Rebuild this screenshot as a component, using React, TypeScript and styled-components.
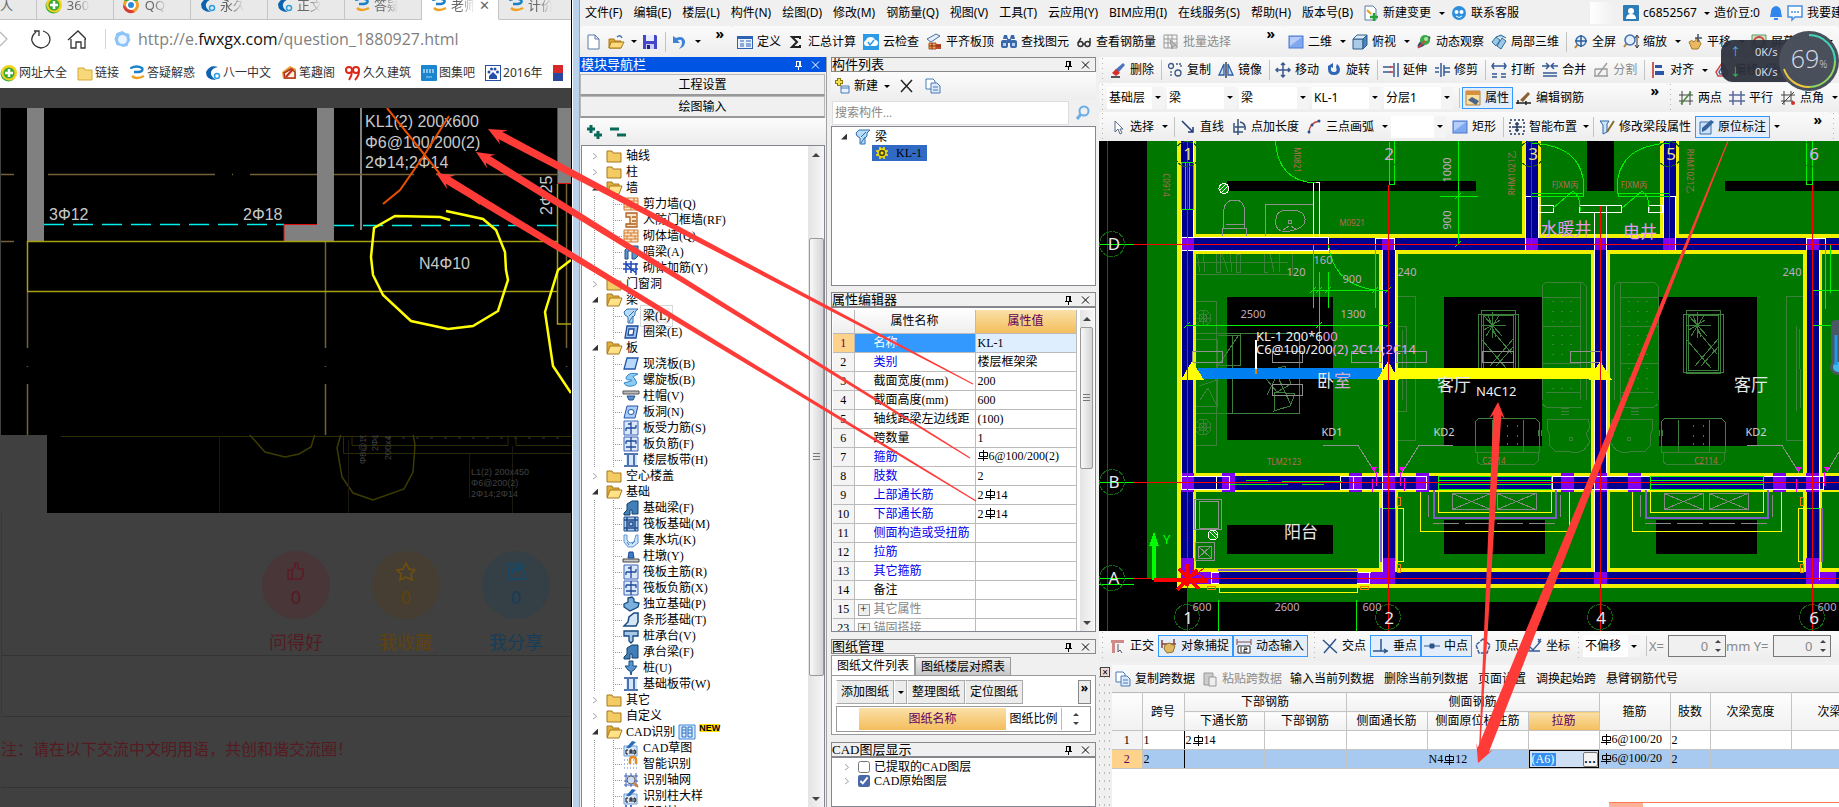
import React from "react";
import styled, { createGlobalStyle, css } from "styled-components";

const UI = `"Noto Sans", "Noto Sans CJK SC", sans-serif`;
const SONG = `"Liberation Serif", "Noto Sans CJK SC", serif`;

const GlobalStyle = createGlobalStyle`
  * { box-sizing: border-box; }
  body { margin: 0; font-family: ${UI}; font-size: 12px; line-height: 16px; color: #000; overflow: hidden; }
  button, input, select { font: inherit; color: inherit; margin: 0; }
  svg { display: block; }
  svg text { white-space: pre; }
`;

/* ---------- icons ---------- */

const blueBox = <rect x="1" y="2" width="14" height="12" fill="#7fa8ee" stroke="#4a78d0" />;
const lens = (x: number, y: number) => (
  <g>
    <path d={`M${x - 3} ${y + 3}L${x - 6} ${y + 7}`} stroke="#c08030" strokeWidth="2" />
    <circle cx={x} cy={y} r="5" fill="#e3f0fc" stroke="#4070b0" strokeWidth="1.5" />
  </g>
);
const cadBadge = (
  <g>
    <path d="M1 6h13v10H1z" fill="#d8e8fa" stroke="#6a9ad0" />
    <path d="M3 8L9 1l4 1-6 6z" fill="#2b6cb8" />
    <path d="M5 10H3v4h2M7 14v-4h2v4M7 12h2M11 10h1l1 2-1 2h-1z" fill="none" stroke="#111" />
  </g>
);

const ICONS: Record<string, React.ReactNode> = {
  file: <path d="M3 1h7l4 4v10H3z M10 1v4h4" fill="#fff" stroke="#5a7ba8" />,
  open: (
    <g>
      <path d="M1 5h5l1 2h6v7H1z" fill="#e0a830" stroke="#a87818" />
      <path d="M3 8h13l-3 6H1z" fill="#ffd97a" stroke="#a87818" />
      <path d="M9 3q3-3 5 1" fill="none" stroke="#4a78b0" strokeWidth="1.5" />
    </g>
  ),
  save: (
    <g>
      <path d="M1 1h13l1 1v13H1z" fill="#4646c8" />
      <path d="M4 1h8v6H4z" fill="#e8ecff" />
      <path d="M4 10h8v5H4z" fill="#c9cdf0" />
      <path d="M5 11h3v4H5z" fill="#202080" />
    </g>
  ),
  undo: <path d="M2 2v7h7L6.500 6.500Q11 4 11 9q0 3-3 6 7-3 6-8-2-6-9-3z" fill="#3b82d8" />,
  define: (
    <g>
      <path d="M0 2h16v13H0z" fill="#2d62b4" />
      <path d="M1 5h14v9H1z" fill="#eaf2ff" />
      <path d="M3 7h4M3 10h4M3 12h4M9 7h5M9 10h5M9 12h5" stroke="#2d62b4" />
    </g>
  ),
  sigma: <path d="M12 5V3H4l5 5-5 5h8v-2" fill="none" stroke="#222" strokeWidth="2" />,
  cloud: (
    <g>
      <rect width="16" height="16" fill="#2b9be8" />
      <path d="M4 12q-3 0-3-3 0-2 2-3 1-3 5-3 3 0 4 3 3 0 3 3t-3 3z" fill="#fff" />
      <path d="M5 8l2 3 4-5" fill="none" stroke="#2b9be8" strokeWidth="1.500" />
    </g>
  ),
  slab: (
    <g>
      <path d="M1 5l9-5 4 2-9 6z" fill="#e8eef8" stroke="#4a6ea8" />
      <path d="M3 9h7v6H3z" fill="#f0a050" stroke="#a05020" />
      <path d="M10 10h5v5h-5z" fill="#c04830" />
      <path d="M3 12h12M6 9v6" stroke="#803010" />
    </g>
  ),
  find: (
    <g fill="#3a68a8">
      <path d="M3 1h3l1 4H2zM10 1h3l1 4H9z" />
      <rect x="0" y="6" width="7" height="8" rx="2" />
      <rect x="9" y="6" width="7" height="8" rx="2" />
      <rect x="6" y="5" width="4" height="4" />
      <path d="M2 9h3v3H2zM11 9h3v3h-3z" fill="#b8d0f0" />
    </g>
  ),
  glasses: (
    <g fill="none" stroke="#333" strokeWidth="1.500">
      <circle cx="4.500" cy="10" r="2.500" />
      <circle cx="11.500" cy="10" r="2.500" />
      <path d="M2 9l3-5M14 9V4M7 10h2" />
    </g>
  ),
  batch: (
    <g fill="none" stroke="#999">
      <path d="M1 1h13v13H1zM1 5h13M1 9h13M5 1v13M9 1v13" />
      <path d="M7 6l7 6-4 0-1 3z" fill="#bbb" />
    </g>
  ),
  rect: <g>{blueBox}<path d="M2 3h12L2 12z" fill="#b5cdf8" /></g>,
  cube: (
    <g stroke="#2c5c8a">
      <path d="M1 5l10 0v10H1z" fill="#a9cbe8" />
      <path d="M1 5l4-4h10l-4 4z" fill="#dcebf8" />
      <path d="M15 1v10l-4 4V5z" fill="#4a86bc" />
    </g>
  ),
  orbit: (
    <g>
      <ellipse cx="8" cy="8" rx="8" ry="3" transform="rotate(-40 8 8)" fill="#2c4a70" />
      <circle cx="9" cy="6" r="5" fill="#3aa848" />
      <path d="M2 14l10-10" stroke="#e04030" strokeWidth="1.500" />
      <circle cx="10" cy="5" r="2" fill="#a8e8a0" />
    </g>
  ),
  part3d: (
    <g fill="#9cc8e8" stroke="#2f6d9c">
      <path d="M1 8l4-5 4 3-4 6zM6 12l5-8 4 3-5 8zM5 3l5-2 5 3" />
    </g>
  ),
  full: (
    <g>
      {lens(9, 7)}
      <path d="M9 1v12M3 7h12" stroke="#2a5a98" strokeWidth="1.500" />
    </g>
  ),
  zoom: (
    <g>
      {lens(7, 6)}
      <path d="M14 2v11M12 4l2-3 2 3M12 11l2 3 2-3" stroke="#333" fill="none" />
    </g>
  ),
  pan: (
    <g>
      <path d="M2 8q3-3 5 0l3-4 2 2 2 4-3 5H5z" fill="#eab860" stroke="#a87828" />
      <path d="M11 0v8M8 4h7" stroke="#44546a" strokeWidth="1.500" />
    </g>
  ),
  rotateScreen: (
    <g>
      <path d="M1 1h14v14H1z" fill="#cfe0c8" stroke="#5a9a60" />
      <circle cx="8" cy="8" r="5" fill="none" stroke="#d04038" strokeWidth="2" />
    </g>
  ),
  erase: (
    <g>
      <path d="M5 8l8-7 2 2-7 8z" fill="#4a74c0" />
      <path d="M2 11l4-4 4 4-4 3z" fill="#d83028" />
      <path d="M1 15h9" stroke="#222" strokeWidth="1.500" />
    </g>
  ),
  copy: (
    <g fill="none" stroke="#3c5888" strokeWidth="1.300">
      <circle cx="4" cy="4" r="2.500" />
      <circle cx="11" cy="11" r="3" />
      <path d="M9 2h5v4M4 9v5" strokeDasharray="2 1" />
    </g>
  ),
  mirror: (
    <g fill="none" stroke="#2c5ca8" strokeWidth="1.300">
      <path d="M6 2v11H1zM10 2v11h5z" fill="#cfe0fa" />
      <path d="M8 0v16" stroke="#223" />
    </g>
  ),
  move: <path d="M8 1v14M1 8h14M6 3l2-2 2 2M6 13l2 2 2-2M3 6L1 8l2 2M13 6l2 2-2 2" fill="none" stroke="#3a5a90" strokeWidth="1.500" />,
  rotate: <path d="M2 4v3q0 6 6 6t6-6q0-3-3-5l-1 3q2 5-2 5-4 0-3-5l2 1V1z" fill="#2f66b8" />,
  extend: (
    <g fill="none" stroke="#345a98" strokeWidth="1.500">
      <path d="M0 5h8M0 10h8M11 1v14M15 1v14" />
      <path d="M7 5h3M7 10h3" stroke="#c03030" />
    </g>
  ),
  trim: <path d="M1 6h4M1 10h4M7 1v14M10 3v11M10 6h6M10 10h6" fill="none" stroke="#345a98" strokeWidth="1.500" />,
  brk: <path d="M1 4h14M3 1L1 4l2 3M13 1l2 3-2 3M1 12h5M10 12h5M1 15h5M10 15h5" fill="none" stroke="#345a98" strokeWidth="1.500" />,
  join: <path d="M0 4h6M10 4h6M4 1l3 3-3 3M12 1L9 4l3 3M1 11h14M1 14h14" fill="none" stroke="#345a98" strokeWidth="1.500" />,
  split: <path d="M1 14h14M2 7h12v7M2 7v7M5 13l9-12" fill="none" stroke="#999" strokeWidth="1.300" />,
  align: (
    <g>
      <path d="M3 0v16" stroke="#c02828" strokeWidth="1.500" />
      <path d="M5 3h7v3H5zM5 9h9v4H5z" fill="#2c55a8" />
    </g>
  ),
  offset: (
    <g fill="none" strokeWidth="1.500">
      <path d="M8 1l6 9-2 4H4l-2-4z" stroke="#c84848" />
      <path d="M8 5l3 5-1 2H6l-1-2z" stroke="#4868a8" />
    </g>
  ),
  stretch: <path d="M2 2h8v12H2zM10 5h4v6h-4z" fill="#d5e2f4" stroke="#3a5a90" />,
  prop: (
    <g>
      <path d="M1 1h14v14H1z" fill="#f8e0a0" stroke="#b08040" />
      <path d="M1 1h14v4H1z" fill="#d8903c" />
      <path d="M3 10l4-3 7 4-3 4z" fill="#4c6488" />
    </g>
  ),
  editBar: (
    <g>
      <path d="M4 10L12 2l2 2-7 8z" fill="#8a6030" />
      <path d="M0 13h15M2 10v4M10 11v4" stroke="#222" strokeWidth="1.500" />
    </g>
  ),
  twoPt: (
    <g fill="none" stroke="#444">
      <path d="M4 1v14M12 1v14M1 5h14M1 11h14" />
      <path d="M3 14L13 2" stroke="#4a8c3a" strokeWidth="1.500" />
    </g>
  ),
  parallel: <path d="M4 1v14M12 1v14M0 5h16M0 11h16" fill="none" stroke="#5a6a98" strokeWidth="1.500" />,
  ptAngle: (
    <g fill="none" stroke="#444">
      <path d="M4 1v14M11 1v10M1 5h14M1 11h12M2 14L14 2" />
      <circle cx="13" cy="13" r="2" fill="#d03030" stroke="none" />
    </g>
  ),
  cursor: <path d="M5 2v11l3-3 2 5 2-1-2-4h3z" fill="#fff" stroke="#5a6a88" />,
  line: <path d="M2 2l11 11M13 8v5H8" fill="none" stroke="#223a78" strokeWidth="1.500" />,
  ptLen: (
    <g fill="none" stroke="#34507c" strokeWidth="1.500">
      <path d="M3 4v9h9M7 0v16M4 8h9" />
      <path d="M9 3q6 1 5 8" />
    </g>
  ),
  arc: (
    <g>
      <path d="M3 14Q3 4 13 2" fill="none" stroke="#c8443c" strokeWidth="1.500" />
      <circle cx="3" cy="13" r="1.500" fill="#2c4c90" />
      <circle cx="6" cy="6" r="1.500" fill="#2c4c90" />
      <circle cx="13" cy="2" r="1.500" fill="#2c4c90" />
    </g>
  ),
  smart: (
    <g fill="none" stroke="#223a60" strokeWidth="1.500">
      <path d="M1 1h14v14H1z" strokeDasharray="2 2" />
      <path d="M8 3v10M3 8h10M6 5h4M6 11h4" />
    </g>
  ),
  beamProp: (
    <g>
      <path d="M1 2h9l-2 3v8l-4 2V6z" fill="#cfe4fa" stroke="#2c66a8" />
      <path d="M8 13l7-11" stroke="#887030" strokeWidth="2" />
    </g>
  ),
  mark: (
    <g>
      <path d="M2 3h11v12H2z" fill="#cde0f6" stroke="#3c6ca8" />
      <path d="M4 9l9-8 3 2-8 8-4 2z" fill="#35659f" />
    </g>
  ),
  ortho: (
    <g>
      <path d="M1 2h13v3H5v10H2V5H1z" fill="#d08a88" />
      <path d="M8 6v8l2-2 2 3" fill="none" stroke="#556" />
    </g>
  ),
  snap: (
    <g>
      <path d="M1 2v8M1 6h14M13 1v5" stroke="#884038" strokeWidth="1.500" />
      <path d="M4 7l4-2 6 3-2 6-6 1-3-4z" fill="#e0b860" stroke="#907030" />
    </g>
  ),
  dyn: (
    <g>
      <path d="M1 1v6M15 1v6M1 4h14" stroke="#804848" fill="none" />
      <path d="M2 8h12v7H2z" fill="#fff" stroke="#222" />
      <path d="M5 9v5M8 10h3v1.500H8V14h3" stroke="#222" fill="none" />
    </g>
  ),
  cross: <path d="M1 2l14 13M14 1L2 15" fill="none" stroke="#2c5690" strokeWidth="1.500" />,
  perp: <path d="M8 1v12M0 13h15M11 11l3 2-3 2" fill="none" stroke="#2c5690" strokeWidth="1.500" />,
  mid: <path d="M0 8h16M6 6h4v4H6z" fill="#2c5690" stroke="#2c5690" />,
  vertex: <path d="M8 1l7 6-3 8H4L1 7z" fill="none" stroke="#345a98" strokeWidth="1.500" strokeDasharray="4 1" />,
  coord: <path d="M3 4v9h11M3 8l4 4 7-8M12 1l3 3M15 1l-3 3" fill="none" stroke="#345a98" strokeWidth="1.300" />,
  pages: (
    <g fill="#fff" stroke="#4a7ab8">
      <path d="M1 1h7l2 2v8H1z" />
      <path d="M6 5h6l3 3v7H6z" fill="#dbe9fb" />
      <path d="M8 9h5M8 12h5" />
    </g>
  ),
  paste: (
    <g fill="#ccc" stroke="#999">
      <path d="M2 2h9v12H2z" />
      <path d="M7 6h7v9H7z" fill="#eee" />
    </g>
  ),
  newItem: (
    <g>
      <path d="M5 0v8M1 4h8" stroke="#8a7a10" strokeWidth="4" />
      <path d="M5 1v6M2 4h6" stroke="#f4e050" strokeWidth="2" />
      <path d="M7 8h8v7H7z" fill="#e8f1ff" stroke="#4a78b8" />
      <path d="M7 10h8" stroke="#4a78b8" />
    </g>
  ),
  del: <path d="M2 2l11 12M13 2L2 14" fill="none" stroke="#222" strokeWidth="1.500" />,
  search: (
    <g fill="none" stroke="#6aaee8" strokeWidth="2">
      <circle cx="9" cy="6" r="4.500" />
      <path d="M6 9l-4 5" strokeWidth="3" />
    </g>
  ),
  change: (
    <g>
      <path d="M2 1h8l3 3v11H2z" fill="#fff" stroke="#5a7ba8" />
      <path d="M4 5l4 4" stroke="#e0a020" strokeWidth="2" />
      <path d="M11 8v8M7 12h8" stroke="#28a038" strokeWidth="2.500" />
    </g>
  ),
  service: (
    <g>
      <circle cx="8" cy="8" r="7" fill="#2b8fe0" />
      <circle cx="5.500" cy="7" r="2" fill="#fff" />
      <circle cx="10.500" cy="7" r="2" fill="#fff" />
      <path d="M5 11q3 3 6 0" fill="none" stroke="#fff" />
    </g>
  ),
  user: (
    <g>
      <rect width="16" height="16" rx="1" fill="#2b7cb8" />
      <circle cx="8" cy="6" r="3" fill="#fff" />
      <path d="M3 14q0-5 5-5t5 5z" fill="#fff" />
    </g>
  ),
  bell: <path d="M8 1q5 1 5 6l1 5H2l1-5q0-5 5-6zM6 13h4v2H6z" fill="#2f86ec" />,
  chat: (
    <g>
      <path d="M1 1h14v11H8l-3 3v-3H1z" fill="#fff" stroke="#4a90e0" strokeWidth="1.500" />
      <path d="M4 7h2M7 7h2M10 7h2" stroke="#4a90e0" strokeWidth="1.500" />
    </g>
  ),
  folder: <path d="M1 3h5l1 2h8v9H1z" fill="#f2cb62" stroke="#a8781c" />,
  folderOpen: (
    <g stroke="#a8781c">
      <path d="M1 2h5l1 2h6v9H1z" fill="#e0ae3c" />
      <path d="M4 6h12l-3 8H1z" fill="#ffe188" />
    </g>
  ),
  wall: (
    <g>
      <path d="M1 2h14v12H1z" fill="#fbe3c4" stroke="#d07a30" />
      <path d="M1 5h14M1 8h14M1 11h14M5 2v3M11 2v3M8 5v3M4 8v3M12 8v3M8 11v3" stroke="#d07a30" />
    </g>
  ),
  doorWall: <path d="M3 1h11v14H3v-3h4V5H3zM9 5h4M9 9h4M7 12h6" fill="#fbe3c4" stroke="#b06020" strokeWidth="1.300" />,
  hidden: <path d="M2 6l4-4h9v10l-3 3H9V7H5v8H2z" fill="#5a94c8" stroke="#1e5286" />,
  wallBar: <path d="M0 4h15M0 9h15M3 1v12M8 1v12M13 3v12M3 4l10 9" fill="none" stroke="#2048b8" strokeWidth="1.500" />,
  beam: (
    <g stroke="#2c70b0">
      <path d="M1 4l3-3h11l-3 3v3l-2 2v6H5V9L2 7z" fill="#b8dcf8" />
      <path d="M6 8l5-5M6 14l4-6" />
    </g>
  ),
  frame: <path d="M4 2h11l-2 12H2zM6 5l-1 6h5l1-6z" fill="#9cc4f0" fillRule="evenodd" stroke="#1f4a98" strokeWidth="1.300" />,
  plate: <path d="M4 2h11l-3 11H1z" fill="#b9d9fb" stroke="#2456a8" strokeWidth="1.300" />,
  spiral: <path d="M15 2Q7 0 4 4t3 4-6 3q2 4 8 3t4-5-3-4 5-3z" fill="#8cccf4" stroke="#2a86c8" />,
  cap: (
    <g>
      <path d="M0 3h16v3H0z" fill="#bbb" stroke="#555" />
      <path d="M4 8h8l-2 4H6z" fill="#5b93d0" stroke="#1c4c8c" />
    </g>
  ),
  hole: <g><path d="M4 2h11l-3 12H1z" fill="#a9cdf6" stroke="#2456a8" /><ellipse cx="8" cy="8" rx="3" ry="2.500" fill="#fff" stroke="#2456a8" /></g>,
  bar1: <g><path d="M1 1h14v14H1z" fill="#dbe9fb" stroke="#3a62b8" /><path d="M8 2v12M3 8h10M3 8v3M13 8V5M5 4h3" fill="none" stroke="#1f4a98" strokeWidth="1.300" /></g>,
  bar2: <g><path d="M1 1h14v14H1z" fill="#dbe9fb" stroke="#3a62b8" /><path d="M8 1v14M3 5h10v3M3 5v3M3 11h10" fill="none" stroke="#1f4a98" strokeWidth="1.300" /></g>,
  strip: <g><path d="M3 3h11v10H3z" fill="#d4e7fb" /><path d="M1 2h14M1 14h14M5 3v10M11 3v10" stroke="#1f4a98" strokeWidth="1.500" /></g>,
  found: <path d="M1 13l3-3V4l5-3h6v13H9v-4H7v5H1z" fill="#3f80b8" stroke="#123c68" />,
  raft: <g fill="none" stroke="#1f4a88"><path d="M1 1h14v14H1z" fill="#a8cdf0" /><path d="M4 1v14M12 1v14M1 4h14M1 12h14M6 6h4v4H6z" strokeWidth="1.500" /></g>,
  pit: <g><path d="M1 3h3v5l3 3 4-1 2-7h2v8l-5 4H5L1 10z" fill="#cfe4fa" stroke="#5a94d0" /><path d="M4 10l2 3M9 12l3-3" stroke="#3a74b8" /></g>,
  pier: <g><path d="M0 11h16v3H0z" fill="#c8c8c8" stroke="#444" /><path d="M5 10l1-6h4l1 6z" fill="#3c7cc8" stroke="#1c4c8c" /></g>,
  block: <path d="M1 8l4-2V2l4-1 2 2v3l5 1-1 4-8 4-6-4z" fill="#7cb0dc" stroke="#174a80" strokeWidth="1.300" />,
  stripFound: <path d="M1 14l4-4 1-5 5-4h4v9l-2 4z" fill="#d6e6f4" stroke="#174a80" strokeWidth="1.500" />,
  pileCap: <path d="M1 3h14v5h-5v5l-2 2-2-2V8H1z" fill="#a8c8e8" stroke="#174a80" strokeWidth="1.300" />,
  pile: <path d="M6 1h4v5h4l-3 4-2 1-1 4-1-4-2-1-3-4h4z" fill="#5a94d0" stroke="#174a80" />,
  cad: cadBadge,
  magnet: <g><path d="M1 4h14M1 8h14M1 12h14" stroke="#4a7ad0" strokeDasharray="1 2" /><path d="M7 8V4q0-3 3-3t3 3v4" fill="none" stroke="#e08a28" strokeWidth="2.500" /></g>,
  gridFind: <g><path d="M3 1v14M8 1v14M13 1v14M1 4h14M1 9h14M1 13h14" stroke="#3a62b8" /><circle cx="8" cy="8" r="4" fill="#cfe0f4" stroke="#666" /><path d="M11 11l4 4" stroke="#d08030" strokeWidth="2" /></g>,
  book: <g><path d="M0 1h16v14H0z" fill="#d9eafc" stroke="#3c86d8" /><path d="M3 3h4v10H3zM9 3h4v10H9zM3 6h4M3 9h4M9 6h4M9 9h4" fill="none" stroke="#2c70c0" /></g>,
  gear: <g><circle cx="8" cy="8" r="4" fill="#4a4a18" stroke="#ffe600" strokeWidth="1.500" /><path d="M6 2v2M10 2v2M6 12v2M10 12v2M2 6h2M2 10h2M12 6h2M12 10h2" stroke="#ffe600" strokeWidth="1.500" /><circle cx="8" cy="8" r="1.500" fill="#ffe600" /></g>,
  web360: <g><circle cx="8" cy="8" r="8" fill="#f2d21c" /><path d="M1 4a8 8 0 0 0 13 9A7 7 0 0 1 1 4" fill="#2fa838" /><circle cx="8" cy="8" r="5.500" fill="#38a838" /><path d="M8 4v8M4 8h8" stroke="#fff" strokeWidth="2.500" /></g>,
  qq: <g><circle cx="8" cy="8" r="8" fill="#f0a028" /><path d="M1 4a8 8 0 0 1 14 0z" fill="#38a850" /><path d="M0 8a8 8 0 0 0 12 7z" fill="#d83c38" /><circle cx="8" cy="8" r="5" fill="#fff" /><circle cx="8" cy="8" r="3" fill="#2b8ad8" /></g>,
  cblue: <g><path d="M13 2Q5-1 1 7q0 8 10 8-6-4-5-8 1-4 7-5" fill="#0d62b0" /><circle cx="12" cy="11" r="2.500" fill="none" stroke="#2aa0e0" strokeWidth="1.500" /></g>,
  swirl: <g fill="none" strokeWidth="2.500"><path d="M2 3q6-3 11 0 2 3-3 4H5" stroke="#1a80c8" /><path d="M3 11q4 4 12 0" stroke="#f0a020" /><circle cx="2" cy="3" r="1" fill="#1a80c8" stroke="none" /></g>,
  book2: <g><path d="M1 7l8-6 6 3v10H2z" fill="#e8a030" /><path d="M3 8l7-4 4 3v6H4z" fill="#fff4d8" stroke="#b03020" strokeWidth="1.500" /><path d="M5 12l7-8" stroke="#c03020" strokeWidth="2" /></g>,
  nines: <g fill="none" stroke="#e02818" strokeWidth="2"><circle cx="4" cy="5" r="3" /><path d="M7 6q0 5-3 9" /><circle cx="11" cy="5" r="3" /><path d="M14 6q0 5-4 9" /></g>,
  tuji: <g><rect width="16" height="16" rx="1" fill="#1a86d0" /><path d="M2 5h12M2 7h12" stroke="#fff" strokeDasharray="2 1" /><path d="M5 12h6" stroke="#9fd0f4" /></g>,
  paw: <g><rect x="0.500" y="0.500" width="15" height="15" fill="#fff" stroke="#2450a8" /><g fill="#2450a8"><circle cx="4" cy="7" r="1.500" /><circle cx="6.500" cy="4" r="1.500" /><circle cx="10" cy="4" r="1.500" /><circle cx="12.500" cy="7" r="1.500" /><path d="M8 7l4 4v3H4v-3z" /></g></g>,
  flag: <g><rect width="10" height="8" fill="#d82828" /><rect y="8" width="10" height="8" fill="#2848a0" /></g>,
  linkFolder: <path d="M1 3h6l1 2h7v10H1z" fill="#f8d878" stroke="#d8a838" />,
};

const Svg16 = styled.svg`
  flex: none;
  width: 16px;
  height: 16px;
  overflow: visible;
`;
const Icon = ({ name }: { name: string }) => (
  <Svg16 viewBox="0 0 16 16" aria-hidden="true">
    {ICONS[name]}
  </Svg16>
);

/* ---------- page shell ---------- */

const Page = styled.div`
  position: relative;
  display: flex;
  height: 100vh;
  min-height: 640px;
  overflow: hidden;
  background: #f0f0f0;
`;
const Browser = styled.section`
  flex: 0 0 571px;
  display: flex;
  flex-direction: column;
  overflow: hidden;
  background: #fff;
`;
const WindowEdge = styled.div`
  flex: 0 0 9px;
  background: linear-gradient(90deg, #000 1px, #fff 1px 2px, #b9d1ea 2px 8px, #9aa2ae 8px);
`;
const CadApp = styled.section`
  flex: 1;
  min-width: 0;
  display: flex;
  flex-direction: column;
`;

/* ---------- browser ---------- */

const Tabs = styled.nav`
  display: flex;
  flex: none;
  height: 20px;
  overflow: hidden;
  background: #e9e9e9;
`;
const Tab = styled.button<{ $active?: boolean; $first?: boolean }>`
  display: flex;
  flex: 0 0 ${(p) => (p.$first ? 37 : 77)}px;
  align-items: center;
  gap: 4px;
  height: 20px;
  padding: 0 0 9px ${(p) => (p.$first ? 0 : 9)}px;
  border: 0;
  border-right: 1px solid #c4c4c4;
  border-bottom: 1px solid ${(p) => (p.$active ? "#fff" : "#c4c4c4")};
  background: ${(p) => (p.$active ? "#fff" : "#e9e9e9")};
  font-size: 13px;
  line-height: 18px;
  color: #666;
  overflow: visible;
`;
const TabTitle = styled.span`
  width: 24px;
  flex: none;
  overflow: hidden;
  white-space: nowrap;
  mask-image: linear-gradient(90deg, #000 40%, transparent);
`;
const AddressBar = styled.div`
  display: flex;
  flex: none;
  align-items: center;
  height: 38px;
  gap: 19px;
`;
const Url = styled.span`
  display: flex;
  align-items: center;
  gap: 7px;
  padding-left: 8px;
  border-left: 1px solid #d4d4d4;
  font-family: "Open Sans", sans-serif;
  font-size: 16px;
  line-height: 20px;
  color: #808080;
  b { font-weight: 400; color: #111; }
`;
const Bookmarks = styled.nav`
  display: flex;
  flex: none;
  align-items: center;
  gap: 10px;
  height: 30px;
  padding-left: 1px;
  overflow: hidden;
`;
const Bookmark = styled.a`
  display: flex;
  flex: none;
  align-items: center;
  gap: 2px;
  color: #333;
  text-decoration: none;
`;
const WebPage = styled.main`
  flex: 1;
  min-height: 0;
  display: flex;
  flex-direction: column;
  padding: 20px 0 0 1px;
  background: #404040;
  overflow: hidden;
`;
const Shot = styled.svg<{ $h: number; $inset?: number }>`
  flex: none;
  width: calc(100% - ${(p) => p.$inset ?? 0}px);
  height: ${(p) => p.$h}px;
  margin-left: ${(p) => p.$inset ?? 0}px;
  background: #000;
  overflow: hidden;
`;
const Votes = styled.div`
  display: flex;
  flex: none;
  justify-content: flex-end;
  gap: 42px;
  height: 143px;
  padding: 38px 21px 0 0;
  border-bottom: 1px solid #343434;
  border-left: 1px solid #383838;
`;
const Vote = styled.button<{ $fg: string; $bg: string }>`
  display: flex;
  flex-direction: column;
  align-items: center;
  width: 68px;
  padding: 0;
  border: 0;
  background: none;
  color: ${(p) => p.$fg};
  font-size: 18px;
  line-height: 24px;
  white-space: nowrap;
  span {
    display: flex;
    flex-direction: column;
    align-items: center;
    justify-content: center;
    gap: 3px;
    width: 68px;
    height: 68px;
    margin-bottom: 11px;
    border-radius: 50%;
    background: ${(p) => p.$bg};
  }
`;
const Blank = styled.div`
  flex: none;
  height: 61px;
  border-bottom: 1px solid #343434;
  border-left: 1px solid #383838;
`;
const Notice = styled.p`
  flex: none;
  height: 71px;
  margin: 0;
  padding-top: 20px;
  border-bottom: 1px solid #343434;
  font-size: 16px;
  line-height: 24px;
  color: #561a20;
  white-space: nowrap;
`;

const bookmarks: [string, string][] = [
  ["web360", "网址大全"], ["linkFolder", "链接"], ["swirl", "答疑解惑"], ["cblue", "八一中文"],
  ["book2", "笔趣阁"], ["nines", "久久建筑"], ["tuji", "图集吧"], ["paw", "2016年"], ["flag", ""],
];
const tabs: [string, string][] = [
  ["web360", "360"], ["qq", "QQ"], ["cblue", "永久"], ["cblue", "正文"], ["swirl", "答疑"], ["swirl", "老师"], ["swirl", "计价"],
];

const DRAFT = `"Liberation Sans", sans-serif`;

const BeamShot = () => (
  <Shot $h={327}>
    <g transform="translate(-1,-108)" fill="none">
      <path d="M27 108h17v133H27zM317 108h17v133h-50v-17h33zM558 108h13v75h-13z" fill="#808080" />
      <path d="M361 108v122" stroke="#808080" strokeWidth="2" />
      <path d="M1 174.500h13M48 174.500h167M232 174.500h1M250 174.500h67M334 174.500h80M436 174.500h122M1 241.500h13M27.500 291v57M27.500 366v1M27.500 384v51M325.500 241v107M325.500 366v1M325.500 384v51M566.500 183v165M566.500 366v1" stroke="#74603a" strokeWidth="1.500" />
      <path d="M44 224.500h240M334 225.500h224" stroke="#0ee" strokeWidth="1.500" strokeDasharray="20 9" />
      <path d="M284 241v-16.500h33M557.500 108v75.500h14" stroke="#e01010" />
      <path d="M27.500 291V241.500H557M27 291.500h530M557.500 184v140h14" stroke="#a8a010" strokeWidth="1.500" />
      <path d="M446 211L483 219 496 230 505 252 506 270 508 280 498 311 473 326 448 329 411 321 383 295 373 275 371 257 374 228 395 216 440 217 450 220M571 260L558 270 545 312 553 366 571 393" stroke="#ff0" strokeWidth="2.500" />
      <g fill="#c8c8c8" fontFamily={DRAFT} fontSize="16">
        <text x="365" y="127">KL1(2) 200x600</text>
        <text x="365" y="148">Φ6@100/200(2)</text>
        <text x="365" y="168">2Φ14;2Φ14</text>
        <text x="49" y="220">3Φ12</text>
        <text x="243" y="220">2Φ18</text>
        <text x="419" y="269">N4Φ10</text>
        <text transform="translate(552 215) rotate(-90)">2Φ25</text>
      </g>
      <path d="M387 108L440 174 480 204M449 116L423 157 400 190 383 204" stroke="#e85000" strokeWidth="2" />
    </g>
  </Shot>
);

const FadedShot = () => (
  <Shot $h={78} $inset={46}>
    <g transform="translate(-47,-435)" fill="none">
      <path d="M61 436.500h510M343.500 436v17.500H571M352 436v9.500h156v-10M516 436v9.500h55" stroke="#2c2c00" />
      <path d="M249 434L265 452 285 457 299 454 311 447 315 434M341 434L337 448 342 477 353 493 373 500 404 489 413 472 415 445 413 434" stroke="#3c3c00" strokeWidth="1.500" />
      <path d="M348.500 440v100M219.500 436v104M512.500 446v94M469.500 454v44" stroke="#1c1a10" />
      <path d="M360 438h210" stroke="#333" strokeDasharray="3 11" />
      <g fill="#404040" fontFamily={DRAFT} fontSize="9">
        <text x="471" y="475">L1(2) 200x450</text>
        <text x="471" y="486">Φ6@200(2)</text>
        <text x="471" y="497">2Φ14;2Φ14</text>
        <text transform="translate(366 464) rotate(-90)">Φ8@100</text>
        <text transform="translate(378 451) rotate(-90)">2Φ14</text>
        <text transform="translate(391 460) rotate(-90)">200x4</text>
      </g>
    </g>
  </Shot>
);

const BrowserPane = () => (
  <Browser>
    <Tabs>
      <Tab $first>人</Tab>
      {tabs.map(([i, t], n) => (
        <Tab key={n} $active={n === 5}>
          <Icon name={i} />
          <TabTitle>{t}</TabTitle>
          {n === 5 && <span>✕</span>}
        </Tab>
      ))}
    </Tabs>
    <AddressBar>
      <svg width="86" height="24" fill="none" stroke="#333" strokeWidth="1.300">
        <path d="M0 5l7 7-7 7" stroke="#bbb" />
        <path d="M36 5q-5 4-4 9 2 6 9 7 8-1 9-8 0-7-7-9M34 4h5v5" />
        <path d="M68 13l10-9 9 9M71 12v9h5v-6h5v6h4v-9" />
      </svg>
      <Url>
        <svg width="17" height="17" viewBox="0 0 17 17">
          <path d="M8.500 0l3 2 4 1 0 4 1 2-2 3-1 3-4 1-3-1-4-1-1-3-1-3 1-3 1-3z" fill="#8cc4f8" />
          <circle cx="8.500" cy="8.500" r="4.500" fill="#e8f4ff" />
        </svg>
        <span>http://e.<b>fwxgx.com</b>/question_1880927.html</span>
      </Url>
    </AddressBar>
    <Bookmarks>
      {bookmarks.map(([i, t]) => (
        <Bookmark href="#" key={i}>
          <Icon name={i} />
          {t}
        </Bookmark>
      ))}
    </Bookmarks>
    <WebPage>
      <BeamShot />
      <FadedShot />
      <Votes>
        <Vote $fg="#561a22" $bg="#483638">
          <span>
            <svg width="20" height="20" fill="none" stroke="#5e1a24" strokeWidth="1.500">
              <path d="M2 8h4v9H2zM6 8l3-3V1q3-1 3 3v3h5v7l-2 3H6" />
            </svg>
            0
          </span>
          问得好
        </Vote>
        <Vote $fg="#60420c" $bg="#463e33">
          <span>
            <svg width="20" height="20" fill="none" stroke="#70500a" strokeWidth="1.500">
              <path d="M10 1l3 6 6 1-4 4 1 6-6-3-6 3 1-6-4-4 6-1z" />
            </svg>
            0
          </span>
          我收藏
        </Vote>
        <Vote $fg="#163e58" $bg="#343f46">
          <span>
            <svg width="20" height="20" fill="none" stroke="#104a6c" strokeWidth="1.500">
              <path d="M9 2H2v15h16v-8M6 12q1-6 7-6V9l5-5-5-3v3q-7 1-7 8" />
            </svg>
            0
          </span>
          我分享
        </Vote>
      </Votes>
      <Blank />
      <Notice>注：请在以下交流中文明用语，共创和谐交流圈！</Notice>
    </WebPage>
  </Browser>
);

/* ---------- toolbar parts ---------- */

const MenuBar = styled.nav`
  display: flex;
  flex: none;
  align-items: center;
  height: 26px;
  padding-left: 5px;
  white-space: nowrap;
  overflow: hidden;
`;
const Menus = styled.div`
  display: flex;
  flex: none;
  gap: 11px;
  margin-right: 7px;
`;
const MenuItem = styled.button`
  flex: none;
  padding: 0;
  border: 0;
  background: none;
`;
const Account = styled.div`
  display: flex;
  align-items: center;
  margin: 0 -8px 0 auto;
  padding-left: 30px;
  background: linear-gradient(90deg, #fff, #f0f0f0 24px);
  ${MenuItem} { margin-right: 8px; }
`;
const ToolRow = styled.div<{ $h: number; $pad?: number }>`
  display: flex;
  flex: none;
  height: ${(p) => p.$h}px;
  padding-left: ${(p) => p.$pad ?? 0}px;
  overflow: hidden;
  white-space: nowrap;
`;
const Strip = styled.div<{ $w?: number; $gripless?: boolean }>`
  display: flex;
  align-items: center;
  flex: ${(p) => (p.$w ? `0 0 ${p.$w}px` : "1 0 auto")};
  padding-left: ${(p) => (p.$gripless ? 2 : 8)}px;
  border-radius: 3px;
  background:
    radial-gradient(circle, #b4b4b4 1px, transparent 1px) 2px 4px / ${(p) => (p.$gripless ? "0 0" : "3px 5px")} repeat-y,
    linear-gradient(#fbfbfb, #ededed);
`;
const ToolBtn = styled.button<{ $on?: boolean; $dim?: boolean }>`
  display: flex;
  flex: none;
  align-items: center;
  gap: 4px;
  height: 22px;
  padding: 0 4px 0 3px;
  border: 0;
  background: none;
  color: ${(p) => (p.$dim ? "#8c8c8c" : "#000")};
  ${(p) => p.$on && css`
    outline: 1px solid #3399ff;
    outline-offset: -1px;
    background: #e3eefa;
  `}
`;
const Divider = styled.i`
  flex: none;
  width: 1px;
  height: 20px;
  margin: 0 2px 0 3px;
  background: #c4c4c4;
`;
const Caret = styled.i<{ $w?: number }>`
  flex: none;
  display: flex;
  align-items: center;
  justify-content: center;
  width: ${(p) => p.$w ?? 13}px;
  height: 22px;
  pointer-events: none;
  &::after {
    content: "";
    border: 3px solid transparent;
    border-top-color: #000;
    border-bottom: 0;
  }
`;
const More = styled.button`
  align-self: flex-start;
  flex: none;
  margin: 0 8px 0 auto;
  padding: 0;
  border: 0;
  background: none;
  font-weight: 700;
  font-size: 14px;
`;
const ComboBox = styled.span<{ $w: number }>`
  display: grid;
  flex: none;
  width: ${(p) => p.$w}px;
  height: 22px;
  margin-right: 3px;
  background: linear-gradient(90deg, #fff calc(100% - 12px), #f4f4f4 0);
  select, i { grid-area: 1 / 1; }
  i { justify-self: end; }
  select { width: 100%; padding: 0 0 0 2px; border: 0; background: none; appearance: none; outline: 0; }
`;
const Combo = ({ label, value, w }: { label: string; value: string; w: number }) => (
  <ComboBox $w={w}>
    <select aria-label={label}>
      <option>{value}</option>
    </select>
    <Caret $w={12} />
  </ComboBox>
);

type ToolDef = string | [string, string, string?];
/* "|" is a divider, "v" a drop-down arrow, otherwise [icon, label, state] */
const Tools = ({ items }: { items: ToolDef[] }) => (
  <>
    {items.map((t, i) =>
      t === "|" ? <Divider key={i} /> : t === "v" ? <Caret key={i} /> : (
        <ToolBtn key={i} $on={t[2] === "on"} $dim={t[2] === "dim"}>
          <Icon name={t[0]} />
          {t[1]}
        </ToolBtn>
      )
    )}
  </>
);

/* ---------- docks ---------- */

const Body = styled.div`
  display: flex;
  flex: 1;
  min-height: 0;
`;
const NavDock = styled.aside`
  flex: 0 0 247px;
  display: flex;
  flex-direction: column;
  font-family: ${SONG};
  border-right: 1px solid #a0a0a0;
`;
const MidDock = styled.aside`
  flex: 0 0 265px;
  display: flex;
  flex-direction: column;
  margin-left: 4px;
  font-family: ${SONG};
`;
const DockBar = styled.header<{ $active?: boolean }>`
  display: flex;
  flex: none;
  align-items: center;
  height: 15px;
  padding-right: 5px;
  border: 1px solid ${(p) => (p.$active ? "#0054e3" : "#888")};
  background: ${(p) => (p.$active ? "#0054e3" : "#f0f0f0")};
  color: ${(p) => (p.$active ? "#fff" : "#000")};
  font-size: 13px;
  line-height: 13px;
  h2 { flex: 1; margin: 0; font: inherit; }
  svg { margin-left: 8px; }
`;
const Dock = ({ title, active }: { title: string; active?: boolean }) => (
  <DockBar $active={active}>
    <h2>{title}</h2>
    <svg width="9" height="10" fill="none" stroke="currentColor">
      <path d="M2 1.500h5M2.500 1v5M6.500 1v5M1 6.500h7M4.500 7v3M5.500 1v5" />
    </svg>
    <svg width="9" height="10" fill="none" stroke="currentColor">
      <path d="M1 1.500l7 7M8 1.500l-7 7" />
    </svg>
  </DockBar>
);
const NavButtons = styled.div`
  display: flex;
  flex: none;
  flex-direction: column;
  padding: 2px 1px 0 0;
`;
const NavButton = styled.button`
  height: 22px;
  padding: 0;
  border: 1px solid #b8b8b8;
  border-bottom: 2px solid #999;
  background: #f0f0f0;
`;
const NavTools = styled.div`
  flex: none;
  height: 27px;
  padding: 6px 0 0 6px;
  background: linear-gradient(#fcfcfc, #ececec);
`;
const TreeBox = styled.div`
  display: flex;
  flex: 1;
  min-height: 0;
  margin: 0 1px 0 1px;
  border: 1px solid #828790;
  border-bottom: 0;
  background: #fff;
`;
const Tree = styled.ul`
  flex: 1;
  margin: 0;
  padding: 2px 0 0;
  list-style: none;
  overflow: hidden;
`;
const TreeRow = styled.li<{ $child?: boolean; $hot?: boolean }>`
  display: flex;
  align-items: center;
  gap: 4px;
  height: 16px;
  padding-left: ${(p) => (p.$child ? 31 : 9)}px;
  white-space: nowrap;
  background: ${(p) => (p.$child ? `repeating-linear-gradient(#999 0 1px, transparent 1px 2px) 12px 0 / 1px 100% no-repeat,
    repeating-linear-gradient(#999 0 1px, transparent 1px 2px) 31px 0 / 1px 100% no-repeat,
    repeating-linear-gradient(90deg, #999 0 1px, transparent 1px 2px) 31px 8px / 10px 1px no-repeat` : "none")};
  svg { margin-left: ${(p) => (p.$child ? 10 : 0)}px; }
  span { ${(p) => p.$hot && "outline: 1px solid #d8d8d8; outline-offset: 2px; background: #f2f2f2;"} }
`;
const Expander = styled.i<{ $open?: boolean }>`
  flex: none;
  width: 11px;
  height: 7px;
  background: ${(p) => (p.$open ? "#333" : "#999")};
  clip-path: ${(p) => (p.$open ? "polygon(7px 0, 7px 6px, 1px 6px)" : "polygon(2px 0, 6px 4px, 2px 7px, 2px 6px, 5px 4px, 2px 1px)")};
`;
const NewTag = styled.b`
  align-self: flex-start;
  background: #ffe600;
  font-family: "Liberation Sans", sans-serif;
  font-size: 9px;
  line-height: 8px;
`;
const ScrollBar = styled.div<{ $w: number; $top: number; $thumb: number }>`
  flex: 0 0 ${(p) => p.$w}px;
  display: flex;
  flex-direction: column;
  align-items: center;
  background: linear-gradient(90deg, #e4e4e4, #f6f6f6);
  &::before {
    content: "";
    margin-top: 7px;
    border: 4px solid transparent;
    border-top: 0;
    border-bottom-color: #444;
  }
  i {
    display: grid;
    place-items: center;
    flex: 0 1 ${(p) => p.$thumb}px;
    width: ${(p) => p.$w - 1}px;
    margin-top: ${(p) => p.$top}px;
    border: 1px solid #999;
    border-radius: 2px;
    background: linear-gradient(90deg, #f8f8f8, #d4d4d8);
  }
  i::after { content: ""; width: 7px; height: 8px; background: repeating-linear-gradient(#777 0 1px, transparent 1px 3px); }
`;
const ScrollEnd = styled.b`
  margin: auto 0 6px;
  border: 4px solid transparent;
  border-bottom: 0;
  border-top-color: #444;
`;

const tree: [string, string][] = [
  ["+", "轴线"], ["+", "柱"], ["-", "墙"], ["wall", "剪力墙(Q)"], ["doorWall", "人防门框墙(RF)"], ["wall", "砌体墙(Q)"],
  ["hidden", "暗梁(A)"], ["wallBar", "砌体加筋(Y)"], ["+", "门窗洞"], ["-", "梁"], ["beam", "梁(L)"], ["frame", "圈梁(E)"],
  ["-", "板"], ["plate", "现浇板(B)"], ["spiral", "螺旋板(B)"], ["cap", "柱帽(V)"], ["hole", "板洞(N)"], ["bar1", "板受力筋(S)"],
  ["bar2", "板负筋(F)"], ["strip", "楼层板带(H)"], ["+", "空心楼盖"], ["-", "基础"], ["found", "基础梁(F)"], ["raft", "筏板基础(M)"],
  ["pit", "集水坑(K)"], ["pier", "柱墩(Y)"], ["bar1", "筏板主筋(R)"], ["bar2", "筏板负筋(X)"], ["block", "独立基础(P)"],
  ["stripFound", "条形基础(T)"], ["pileCap", "桩承台(V)"], ["found", "承台梁(F)"], ["pile", "桩(U)"], ["strip", "基础板带(W)"],
  ["+", "其它"], ["+", "自定义"], ["-", "CAD识别"], ["cad", "CAD草图"], ["magnet", "智能识别"], ["gridFind", "识别轴网"],
  ["cad", "识别柱大样"], ["wallBar", "识别柱"],
];

const NavPanel = () => (
  <NavDock>
    <Dock title="模块导航栏" active />
    <NavButtons>
      <NavButton>工程设置</NavButton>
      <NavButton>绘图输入</NavButton>
    </NavButtons>
    <NavTools>
      <svg width="42" height="18" fill="none" stroke="#0a6a5a" strokeWidth="3">
        <path d="M1 5h8M5 1v8M8 11h8M12 7v8M24 5h9M31 11h9" />
      </svg>
    </NavTools>
    <TreeBox>
      <Tree>
        {tree.map(([k, t], i) => {
          const group = k === "+" || k === "-";
          return (
            <TreeRow key={i} $child={!group} $hot={i === 10}>
              {group && <Expander $open={k === "-"} />}
              <Icon name={k === "+" ? "folder" : k === "-" ? "folderOpen" : k} />
              <span>{t}</span>
              {t === "CAD识别" && <><Icon name="book" /><NewTag>NEW</NewTag></>}
            </TreeRow>
          );
        })}
      </Tree>
      <ScrollBar $w={16} $top={81} $thumb={438}><i /><ScrollEnd /></ScrollBar>
    </TreeBox>
  </NavDock>
);

const MidTools = styled.div`
  display: flex;
  flex: none;
  align-items: center;
  gap: 4px;
  height: 28px;
  background: linear-gradient(#fcfcfc, #eee);
  font-family: ${UI};
`;
const SearchRow = styled.label`
  display: flex;
  flex: none;
  align-items: center;
  gap: 6px;
  height: 26px;
  padding-right: 5px;
  input { flex: 1; min-width: 0; height: 24px; margin-left: 1px; padding: 0 2px; border: 1px solid #ddd; background: #fff; }
  input::placeholder { color: #888; }
`;
const ListBox = styled.div<{ $h?: number }>`
  flex: ${(p) => (p.$h ? `0 0 ${p.$h}px` : "1")};
  overflow: hidden;
  padding: 2px 0 0 8px;
  border: 1px solid #828790;
  background: #fff;
`;
const ListRow = styled.div<{ $indent?: number }>`
  display: flex;
  align-items: center;
  gap: 4px;
  height: 16px;
  padding-left: ${(p) => p.$indent ?? 0}px;
`;
const Selected = styled.span`
  display: flex;
  align-items: center;
  gap: 6px;
  padding: 0 5px 0 2px;
  background: #316ac5;
  color: #000;
`;
const Spacer = styled.div<{ $h: number }>`
  flex: 0 0 ${(p) => p.$h}px;
`;

const Rebar = () => (
  <svg width="10" height="11" viewBox="0 0 10 11" fill="none" stroke="currentColor" aria-label="Φ">
    <path d="M5.500 0v11M1.500 2.500h8v4h-8zM0 8.500h10" />
  </svg>
);
const Value = styled.span`
  display: inline-flex;
  align-items: center;
  gap: 1px;
`;
/* "#" in a value stands for the steel grade sign */
const Steel = ({ v }: { v: string }) => (
  <Value>
    {v.split("#").map((s, i) => (
      <React.Fragment key={i}>
        {i > 0 && <Rebar />}
        {s}
      </React.Fragment>
    ))}
  </Value>
);

const PropBox = styled.div`
  display: flex;
  flex: 0 0 325px;
  overflow: hidden;
  padding: 2px 1px 0;
  border: 1px solid #828790;
  background: #fff;
`;
const PropTable = styled.table`
  flex: none;
  width: 243px;
  table-layout: fixed;
  border-collapse: collapse;
  align-self: flex-start;
  white-space: nowrap;
  th { height: 23px; padding: 0; background: linear-gradient(#fdfdfd, #eee); font-weight: 400; }
  th:last-child { background: linear-gradient(#fae0a8, #f4bd5c); color: #600060; }
  td { height: 19px; padding: 0 2px; line-height: 16px; overflow: hidden; }
  td, th { border: solid #bbb; border-width: 0 1px 1px 0; }
  td:first-child { background: #f4f4f4; text-align: center; padding: 0; }
`;
const PropRow = styled.tr<{ $sel?: boolean; $tone: string }>`
  td:nth-child(2) { padding-left: ${(p) => (p.$tone === "#888" ? 3 : 19)}px; color: ${(p) => p.$tone}; }
  ${(p) => p.$sel && css`
    td:nth-child(1) { background: #ffd28c; color: #600060; }
    td:nth-child(2) { background: #3399ff; color: #fff; }
    td:nth-child(3) { background: #dfeeff; }
  `}
`;
const Plus = styled.button`
  width: 12px;
  height: 12px;
  margin-right: 4px;
  padding: 0;
  border: 1px solid #999;
  background: #eee;
  color: #000;
  line-height: 9px;
  vertical-align: middle;
`;
const props: [string, string, string, string][] = [
  ["1", "名称", "KL-1", "b"], ["2", "类别", "楼层框架梁", "b"], ["3", "截面宽度(mm)", "200", ""], ["4", "截面高度(mm)", "600", ""],
  ["5", "轴线距梁左边线距", " (100)", ""], ["6", "跨数量", "1", ""], ["7", "箍筋", "#6@100/200(2)", "b"], ["8", "肢数", "2", "b"],
  ["9", "上部通长筋", "2#14", "b"], ["10", "下部通长筋", "2#14", "b"], ["11", "侧面构造或受扭筋", "", "b"], ["12", "拉筋", "", "b"],
  ["13", "其它箍筋", "", "b"], ["14", "备注", "", ""], ["15", "其它属性", "", "g"], ["23", "锚固搭接", "", "g"],
];

const SheetTabs = styled.div`
  display: flex;
  flex: none;
  align-items: flex-end;
  height: 21px;
`;
const SheetTab = styled.button<{ $on?: boolean }>`
  height: ${(p) => (p.$on ? 20 : 18)}px;
  padding: 0 5px;
  border: 1px solid #999;
  border-bottom: 0;
  background: ${(p) => (p.$on ? "#fff" : "linear-gradient(#eee, #c8c8c8)")};
`;
const SheetBox = styled.div`
  flex: 0 0 60px;
  padding: 4px 4px 0;
  border: 1px solid #999;
  background: #fff;
`;
const SheetTools = styled.div`
  display: flex;
  height: 24px;
  font-family: ${UI};
`;
const SheetBtn = styled.button`
  flex: none;
  height: 24px;
  padding: 0 4px;
  border: 1px solid #aaa;
  border-left-color: #fff;
  background: #ececec;
  &:last-child { margin-left: auto; padding: 0 2px 8px; border-color: #888; font-weight: 700; line-height: 14px; }
`;
const SheetHead = styled.div`
  display: grid;
  grid-template-columns: 22px 1fr 56px 28px;
  align-items: center;
  height: 26px;
  margin-top: 2px;
  border: 1px solid #999;
  line-height: 22px;
  text-align: center;
  span:nth-child(2) { background: linear-gradient(#fae0a8, #f4bd5c); color: #600060; }
  span:nth-child(3) { border-right: 1px solid #bbb; }
`;
const Spin = styled.span`
  display: flex;
  flex-direction: column;
  align-items: center;
  gap: 6px;
  &::before, &::after { content: ""; border: 3px solid transparent; }
  &::before { border-top: 0; border-bottom-color: #444; }
  &::after { border-bottom: 0; border-top-color: #444; }
`;
const LayerRow = styled.label`
  display: flex;
  align-items: center;
  height: 14px;
  gap: 4px;
  padding-left: 3px;
  input { width: 12px; height: 12px; accent-color: #4a68a8; }
`;

const MidPanel = () => (
  <MidDock>
    <Dock title="构件列表" />
    <MidTools>
      <ToolBtn><Icon name="newItem" />新建<Caret $w={9} /></ToolBtn>
      <Icon name="del" />
      <Spacer $h={2} />
      <Icon name="pages" />
    </MidTools>
    <SearchRow>
      <input type="text" aria-label="搜索构件" placeholder="搜索构件..." />
      <Icon name="search" />
    </SearchRow>
    <ListBox $h={160}>
      <ListRow><Expander $open /><Icon name="beam" />梁</ListRow>
      <ListRow $indent={32}><Selected><Icon name="gear" />KL-1</Selected></ListRow>
    </ListBox>
    <Spacer $h={6} />
    <Dock title="属性编辑器" />
    <PropBox>
      <PropTable>
        <colgroup><col width="21" /><col width="121" /><col width="101" /></colgroup>
        <thead><tr><th /><th>属性名称</th><th>属性值</th></tr></thead>
        <tbody>
          {props.map(([n, k, v, tone], i) => (
            <PropRow key={n} $sel={i === 0} $tone={tone === "b" ? "#0000ee" : tone === "g" ? "#888" : "#000"}>
              <td>{n}</td>
              <td>{tone === "g" && <Plus>+</Plus>}{k}</td>
              <td><Steel v={v} /></td>
            </PropRow>
          ))}
        </tbody>
      </PropTable>
      <Spacer $h={3} />
      <ScrollBar $w={14} $top={6} $thumb={142}><i /><ScrollEnd /></ScrollBar>
    </PropBox>
    <Spacer $h={7} />
    <Dock title="图纸管理" />
    <SheetTabs>
      <SheetTab $on>图纸文件列表</SheetTab>
      <SheetTab>图纸楼层对照表</SheetTab>
    </SheetTabs>
    <SheetBox>
      <SheetTools>
        <SheetBtn>添加图纸</SheetBtn>
        <SheetBtn aria-label="更多"><Caret $w={3} /></SheetBtn>
        <SheetBtn>整理图纸</SheetBtn>
        <SheetBtn>定位图纸</SheetBtn>
        <SheetBtn>»</SheetBtn>
      </SheetTools>
      <SheetHead><span /><span>图纸名称</span><span>图纸比例</span><Spin /></SheetHead>
    </SheetBox>
    <Spacer $h={7} />
    <Dock title="CAD图层显示" />
    <ListBox>
      <LayerRow><Expander /><input type="checkbox" />已提取的CAD图层</LayerRow>
      <LayerRow><Expander /><input type="checkbox" defaultChecked />CAD原始图层</LayerRow>
    </ListBox>
  </MidDock>
);

/* ---------- floor plan ---------- */

const Work = styled.main`
  flex: 1;
  min-width: 0;
  display: flex;
  flex-direction: column;
  margin-left: 3px;
`;
const Canvas = styled.svg`
  flex: 1;
  min-height: 0;
  width: 100%;
  background: #000;
  overflow: hidden;
`;

const R = (list: number[][], fill: string) => list.map(([x1, y1, x2, y2], i) => (
  <rect key={i} x={x1} y={y1} width={x2 - x1} height={y2 - y1} fill={fill} />
));
const yellow = "#f0f000", navy = "#000090";
const verticals = [[1177, 141, 588], [1379, 250, 588], [1591, 250, 588], [1803, 250, 588], [1522, 141, 250], [1660, 141, 250]];
const posts = [
  ...[1181, 1382, 1525, 1594, 1663, 1806].map((x) => [x, 238, x + 13, 250]),
  ...[1181, 1222, 1349, 1382, 1416, 1561, 1594, 1628, 1773, 1806].map((x) => [x, 473, x + 13, 492]),
  [1181, 558, 1194, 584], [1194, 572, 1219, 584], [1357, 572, 1382, 584], [1382, 558, 1395, 584],
  [1594, 572, 1607, 584], [1806, 558, 1819, 584], [1819, 572, 1836, 584],
];

const Sofa = ({ x, flip }: { x: number; flip?: boolean }) => (
  <g transform={`translate(${x} 0)${flip ? " scale(-1 1)" : ""}`}>
    <path d="M0 400V286l4-4h36l4 4v114M0 297h38M38 283v117M0 326h38M0 363h38M4 392h34M0 404l4 3h36" />
    <path d="M10 301h26M10 311h26M10 321h26M10 335h26M10 344h26M10 354h26M10 368h26M10 378h26M10 388h26" strokeDasharray="2 7" />
    <path d="M6 419h40l2 8-4 7 4 8-6 8-8 3-10-2-10 1-7-7 1-9-3-8z" />
    <circle cx="29" cy="439" r="2" />
    <path d="M19 408h8M19 411h8M19 414h8M-4 430v6M-1 430v6" />
  </g>
);
const Table = ({ x }: { x: number }) => (
  <g transform={`translate(${x} 0)`}>
    <path d="M0 314h40v58H0zM3 310h34v63H3zM5 315h30v55H5z" />
    <path d="M14 312v26M3 325h25M6 316l18 20M22 314L8 336M6 330l16-10M10 315l8 22" />
    <path d="M14 330l20 24M4 340l24 28M18 366l18-20M12 366l24-28" />
  </g>
);
const Chair = ({ x }: { x: number }) => (
  <path d={`M${x} 422l4-4h56l4 4v30H${x}zM${x + 17} 420v33M${x + 48} 420v33M${x + 2} 453v9l3 2h55l3-3v-9M${x + 32} 425v2M${x + 42} 425v2M${x + 32} 435v2M${x + 42} 435v2M${x + 32} 443v2M${x + 42} 443v2`} />
);
const Balcony = ({ x1, x2 }: { x1: number; x2: number }) => (
  <g fill="none">
    <path d={`M${x1} 492V531.500H${x2}V492`} stroke="#ff0" />
    <path d={`M${x1 + 18} 490V512.500H${x2 - 18}V490`} stroke="#ff0" />
    <path d={`M${x1 + 13.5} 490V518H${x2 - 13.5}V490`} stroke="#8060c8" strokeWidth="2" />
    <path d={`M${x1 + 8.5} 495v22M${x2 - 8.5} 495v22`} stroke="#888" />
    <path d={`M${x1 + 13} 523.500h${x2 - x1 - 26}`} stroke="#888" strokeDasharray="26 6" />
    {[x1 + 32, x1 + 77].map((x) => (
      <path key={x} d={`M${x} 493.500h39v16h-39zM${x} 493.500l39 16M${x} 509.500l39-16`} stroke="#888" />
    ))}
    <path d={`M${x1 + 18} 476.500H${x2 - 18}V489.500H${x1 + 18}zM${x1 + 18} 480.500H${x2 - 18}M${x1 + 18} 484.500H${x2 - 18}`} stroke="#0f0" />
  </g>
);

const Plan = () => (
  <Canvas shapeRendering="crispEdges">
    <g transform="translate(-1099,-141)">
      {R([[1147, 141, 2600, 578], [1187, 578, 2600, 602]], "#007800")}
      {R([
        [1227, 181, 1476, 191], [1587, 141, 1614, 191], [1725, 181, 2600, 191], [1227, 297, 1333, 440], [1444, 297, 1542, 446],
        [1659, 297, 1757, 446], [1227, 525, 1333, 554], [1444, 520, 1545, 554], [1656, 520, 1757, 554],
      ], "#000")}

      <g fill="none" stroke="#3c803c">
        <path d="M1193 249.500h99v25h-99zM1195 262.500h93M1197 253l3 19M1203 253l2 19M1216 254v18h4v-18M1222 254l6 18M1230 254l2 18M1236 254h4v18h-4zM1264 254v18h4M1270 254l4 18M1279 254v18" />
        <path d="M1192.500 301.500h24v144h-24zM1196 333.500h103v80h-103M1218 336L1240 335v30h-20M1232 335v78M1218 366l20-30M1196 339h21v67h-21" />
        <circle cx="1203" cy="318" r="8" /><circle cx="1203" cy="318" r="4" /><circle cx="1203" cy="427" r="8" /><circle cx="1203" cy="427" r="4" />
        <path d="M1195 318h16M1203 310v16M1197 312l12 12M1209 312l-12 12M1195 427h16M1203 419v16M1197 421l12 12M1209 421l-12 12" />
        <path d="M1265 372l20-6 6 18-14 8-10-12zM1275 392l20 2-5 12-16 5zM1267 395l10-20 14 30M1197 370l20 10-18 6M1200 400l8-12 8 16" />
        <path d="M1393.500 296.500h22v144h-22M1398 326h8v85h-8M1402 330v70" />
        <path d="M1786.500 296.500h21v144h-21zM1796 326v85M1799 328l2 80" />
        <Sofa x={1542} /><Sofa x={1658} flip /><Table x={1478} /><Table x={1683} /><Chair x={1475} /><Chair x={1661} />
      </g>

      {verticals.map(([x, a, b], i) => <rect key={i} x={x} y={a} width="19" height={b - a} fill={yellow} />)}
      {R([[1177, 234, 2600, 254], [1177, 473, 2600, 492], [1177, 568, 2600, 588]], yellow)}
      {R([[1181, 238, 2600, 250], [1181, 476, 2600, 490], [1181, 572, 2600, 584]], navy)}
      {verticals.map(([x, a, b], i) => <rect key={i} x={x + 4} y={a} width="12" height={Math.min(b, 584) - a} fill={navy} />)}
      {R(posts, "#8000f0")}

      <g fill="none" stroke="#fff">
        <path d="M1181 237.500h148M1181 250.500h148M1328.500 238v12M1375.500 250v-12h19v12M1181.500 210v280M1193.500 141v97M1313.500 182.500h6v55h-6z" />
        <path d="M1382.500 250v322M1395.500 250v222M1181 476.500h48v13h-48M1216.500 476v14M1340.500 476.500h86v13h-86zM1353.500 476v14M1525.500 250v-53.500h13v41M1663.500 238v-41.500h12V250M1538 205.500h15v7h-15M1579.500 205.500h42v7h-42zM1648.500 205.500h14v7h-14zM1594.500 212v360M1606.500 205v268M1552.500 476.500h98v13h-98zM1763.500 476.500h60v13h-60zM1806.500 250v-12h19v12M1819.500 250v330M1211.500 572v12M1370.500 572.500h-13M1219 572.500h-8v11h8M1357 583.500h12v-11" />
      </g>

      <g fill="none" stroke="#00f000">
        <path d="M1181.500 162h12v47h-12zM1185 162v47M1189 162v47M1275.500 141q2 40 40 42M1389 141v43.500h5V141M1458.500 141v103M1440 196.500h38M1313.500 244v64M1328.500 272v36M1375.500 244v64M1319.500 272v72M1313 290.500h76M1187 325.500h201M1328.500 244q4 40 46 46" />
        <path d="M1316 293l6-6M1325 293l6-6M1310 293l6-6M1372 293l6-6M1385 293l6-6M1184 328l6-6M1316 328l6-6M1385 328l6-6M1455 199l6-6M1455 247l6-6" />
        <path d="M1531 193.500h52v3h-52M1583.500 194q4-48-52-51M1669 193.500h-51v3h51M1617.500 194q-4-48 52-51M1553 208l20-17q8 6 7 20M1622 208l20-17q8 6 7 20M1806.500 141v43h6v-43M1812 290.500h30M1812 325.500h30M1825.500 245v64M1830 245v48" />
        <path d="M1218.500 600v31M1356.500 600v31M1222.500 570.500h134M1230 484.500h58M1246 480.500h22M1282 481.500h60M1302 484.500h22" />
        <path d="M1382.500 508.500h13v53M1806.500 508.500h13v53" />
      </g>
      <Balcony x1={1420} x2={1569} /><Balcony x1={1632} x2={1781} />
      <path d="M1219 584v8.500h138V584M1395 508.500h8v53h-8M1806 508.500h-8v53h8" fill="none" stroke="#ff0" />
      <path d="M1218 569.500h139M1381 508v54M1822 508v54" stroke="#8060c8" strokeWidth="2" fill="none" />
      <path d="M1207.500 586.500h8v3h-8zM1360 586.500h8v3h-8zM1397.500 497h3v8h-3zM1397.500 564h3v8h-3zM1800.500 497h3v8h-3zM1800.500 564h3v8h-3z" fill="none" stroke="#f08000" />

      <g fill="none" stroke="#909090">
        <path d="M1222 236v-8h24v8M1223.500 228v-14q0-14 11-14t10 14v14M1226 224h18M1265.500 236v-31.500H1313M1276 219q0-9 14-9t15 9-15 12-14-12M1283 230l6-4M1297 230l-6-4" />
        <circle cx="1290" cy="222" r="2" />
        <path d="M1192 351.500h30v11h-30zM1272 351.500h30v11h-30zM1351 351.500h30v11h-30zM1396 351.500h30v11h-30zM1272 384.500h30v11h-30zM1482 351.500h31v11h-31zM1570 351.500h31v11h-31z" />
        <path d="M1323 445.500h35l17 27M1453 445.500h-34l-17 27M1747 445.500h35l17 27M1839 452l-12 20" />
        <path d="M1194 499.500h27v30h-27zM1199.500 501h19v27h-19zM1195 542.500h19v18h-19zM1198 546h13v12h-13zM1198 546l13 12M1211 546l-13 12" />
      </g>
      <g fill="#090" stroke="#fff">
        <circle cx="1224" cy="188.500" r="5" /><circle cx="1213" cy="535" r="5" />
        <path d="M1220 190l6-6M1222 192l6-6M1210 532l6 6M1212 530l5 5" />
      </g>
      <path d="M1371 467h6l-3 5zM1399 467h6l-3 5zM1796 467h6l-3 5zM1824 467h6l-3 5z" fill="#f0f" />
      <path d="M1372.500 479v13M1376.500 472v14M1400.500 472v14M1404.500 478v13M1796.500 479v13M1824.500 472v14" stroke="#f0f" />

      {R([[1198, 368, 1382, 379]], "#0080f0")}
      {R([[1395, 368, 1605, 379]], "#ff0")}
      <path d="M1181 380l11-19 12 19zM1377 380l11-19 11 19zM1589 380l11-19 12 19z" fill="#ff0" />
      <path d="M1256 340v29" stroke="#fff" strokeWidth="2" />
      <path d="M1256 369v5" stroke="#f08000" strokeWidth="2" />

      <path d="M1107.500 141v490" stroke="#0a640a" />
      <path d="M1099 244.500h35M1099 482.500h35M1099 578.500h35M1099 584.500h35" stroke="#0f0" />
      <path d="M1134 244.500H2600M1134 482.500H2600M1134 578.500H2600M1187.500 141v490M1388.500 185v446M1600.500 206v425M1812.500 185v446M1531.500 141v109M1669.500 141v109" stroke="#f00" fill="none" />
      <g fill="none" stroke="#0c6a0c">
        {[[1112, 244], [1112, 482], [1112, 578], [1187, 617], [1388, 617], [1600, 617], [1812, 617], [1187, 154], [1388, 154], [1531, 154], [1669, 154], [1812, 154]].map(([x, y]) => (
          <circle key={`${x}-${y}`} cx={x} cy={y} r="12.500" strokeDasharray="5 1" />
        ))}
      </g>

      <path d="M1152 580V546h-3l5-14 5 14h-3v34z" fill="#0f0" />
      <path d="M1154 580h34M1179 569l20 20M1177 590l20-20M1187 564v22M1192 581h16" stroke="#f00" strokeWidth="4" />
      <path d="M1192 570l12 8M1204 568l-10 8" stroke="#f00" />

      <g fontFamily={`"Noto Sans", "Noto Sans CJK SC", sans-serif`}>
        <g fill="#e8e8e8" fontSize="17" textAnchor="middle">
          <text x="1114" y="250">D</text><text x="1114" y="488">B</text><text x="1114" y="584">A</text>
          <text x="1188" y="624">1</text><text x="1389" y="624">2</text><text x="1601" y="624">4</text><text x="1814" y="624">6</text>
          <text x="1188" y="160" fill="#e8d888">1</text><text x="1389" y="160" fill="#d8a8d8">2</text><text x="1533" y="160" fill="#e8e088">3</text>
          <text x="1671" y="160" fill="#e8e088">5</text><text x="1814" y="160" fill="#e8a8e8">6</text>
          <text x="1301" y="538">阳台</text><text x="1334" y="387">卧<tspan fill="#d8a8d8">室</tspan></text>
          <text x="1454" y="391">客厅</text><text x="1751" y="391">客厅</text>
          <text x="1566" y="235" fill="#e898f0">水暖井</text><text x="1640" y="238" fill="#e898f0">电井</text>
        </g>
        <g fill="#f0f0f0" fontSize="13">
          <text x="1256" y="341">KL-1 200*6<tspan fill="#e8a0e8">00</tspan></text>
          <text x="1256" y="354">C6@100/200<tspan fill="#e8a0e8">(2) 2C14;2C14</tspan></text>
          <text x="1476" y="396">N4C12</text>
        </g>
        <g fill="#c0a8c0" fontSize="11" textAnchor="middle">
          <text x="1253" y="318">2500</text><text x="1353" y="318">1300</text><text x="1352" y="283">900</text><text x="1323" y="264">160</text>
          <text x="1296" y="276">120</text><text x="1407" y="276">240</text><text x="1792" y="276">240</text>
          <text x="1202" y="611">600</text><text x="1287" y="611">2600</text><text x="1372" y="611">600</text><text x="1827" y="611">600</text>
          <text transform="translate(1451 170) rotate(-90)">1000</text><text transform="translate(1451 220) rotate(-90)">900</text>
          <text x="1332" y="436" fill="#d0d0d0">KD1</text><text x="1444" y="436" fill="#d0d0d0">KD2</text><text x="1756" y="436" fill="#d0d0d0">KD2</text>
        </g>
        <g fill="#b86858" fontSize="8" textAnchor="middle">
          <text x="1352" y="226">M0921</text><text x="1284" y="465">TLM2123</text><text x="1494" y="464">C2114</text><text x="1706" y="464">C2114</text>
          <text x="1565" y="188">FJXM丙</text><text x="1634" y="188">FJXM丙</text>
          <text transform="translate(1294 160) rotate(90)">M0821</text><text transform="translate(1163 185) rotate(90)">C0914</text>
          <text transform="translate(1515 173) rotate(-90)">RHM1021乙</text><text transform="translate(1687 171) rotate(90)">RHM1021乙</text>
        </g>
        <text x="1163" y="544" fill="#0f0" fontSize="13">Y</text>
      </g>
    </g>
  </Canvas>
);

/* ---------- bottom area ---------- */

const OffsetField = styled.label`
  display: flex;
  align-items: center;
  gap: 4px;
  color: #888;
  font-size: 13px;
`;
const NumberBox = styled.span`
  display: flex;
  align-items: center;
  width: 58px;
  height: 22px;
  padding-right: 4px;
  border: 1px solid #777;
  background: #f0f0f0;
  input { flex: 1; min-width: 0; padding: 0 7px 0 0; border: 0; background: none; text-align: right; }
`;
const SpanDock = styled.section`
  display: flex;
  flex: 0 0 142px;
  overflow: hidden;
`;
const Grip = styled.div`
  flex: 0 0 13px;
  padding-top: 2px;
  background: radial-gradient(circle, #bbb 1px, transparent 1px) 3px 16px / 5px 8px;
  button { display: grid; place-items: center; width: 10px; height: 10px; margin-left: 1px; padding: 0; border: 1px solid #444; background: #f0d8d8; font-size: 10px; line-height: 8px; }
`;
const SpanMain = styled.div`
  flex: 1;
  min-width: 0;
  overflow: hidden;
  background: #fff;
  font-family: ${SONG};
`;
const SpanTools = styled.div`
  display: flex;
  align-items: center;
  height: 27px;
  background: linear-gradient(#fafafa, #ececec);
  font-family: ${UI};
  white-space: nowrap;
`;
const TextBtn = styled.button`
  flex: none;
  padding: 0 6px 0 4px;
  border: 0;
  background: none;
`;
const SpanTable = styled.table`
  width: 780px;
  table-layout: fixed;
  border-collapse: collapse;
  border-top: 1px solid #bbb;
  white-space: nowrap;
  th, td { height: 19px; padding: 0 1px; border: solid #c4c4c4; border-width: 0 1px 1px 0; font-weight: 400; line-height: 16px; overflow: hidden; }
  th { background: linear-gradient(#fdfdfd, #f1f1f1); }
  td:nth-child(1) { background: #f4f4f4; text-align: center; }
  td:nth-child(2) { border-right: 1px solid #000; }
`;
const ThHot = styled.th`
  && { background: linear-gradient(#fae0a8, #f4bd5c); color: #600060; }
`;
const SpanRow = styled.tr<{ $sel?: boolean }>`
  ${(p) => p.$sel && css`
    background: #a8caf0;
    && td:first-child { background: #ffd28c; color: #600060; }
  `}
`;
const EditCell = styled.div`
  display: flex;
  align-items: center;
  height: 18px;
  margin: 0 -1px;
  padding: 0 1px;
  outline: 2px solid #000;
  outline-offset: -1px;
  background: #cfe0f5;
  input { width: 24px; height: 13px; margin-left: 2px; padding: 0; border: 0; background: #3390f0; color: #fff; }
  button { width: 15px; height: 15px; margin-left: auto; padding: 0; border: 1px solid #777; border-radius: 2px; background: #f4f4f4; line-height: 8px; font-weight: 700; }
`;

const cols = [30, 42, 80, 82, 81, 101, 71, 71, 40, 81, 101];

const SpanPanel = () => (
  <SpanDock>
    <Grip><button aria-label="关闭">×</button></Grip>
    <SpanMain>
      <SpanTools>
        <ToolBtn><Icon name="pages" />复制跨数据</ToolBtn>
        <ToolBtn $dim><Icon name="paste" />粘贴跨数据</ToolBtn>
        {["输入当前列数据", "删除当前列数据", "页面设置", "调换起始跨", "悬臂钢筋代号"].map((t) => <TextBtn key={t}>{t}</TextBtn>)}
      </SpanTools>
      <SpanTable>
        <colgroup>{cols.map((w, i) => <col key={i} width={w} />)}</colgroup>
        <thead>
          <tr>
            <th rowSpan={2} /><th rowSpan={2}>跨号</th><th colSpan={2}>下部钢筋</th><th colSpan={3}>侧面钢筋</th>
            <th rowSpan={2}>箍筋</th><th rowSpan={2}>肢数</th><th rowSpan={2}>次梁宽度</th><th rowSpan={2}>次梁加筋</th>
          </tr>
          <tr><th>下通长筋</th><th>下部钢筋</th><th>侧面通长筋</th><th>侧面原位标注筋</th><ThHot>拉筋</ThHot></tr>
        </thead>
        <tbody>
          <SpanRow>
            <td>1</td><td>1</td><td><Steel v="2#14" /></td><td /><td /><td /><td />
            <td><Steel v="#6@100/20" /></td><td>2</td><td /><td />
          </SpanRow>
          <SpanRow $sel>
            <td>2</td><td>2</td><td /><td /><td /><td><Steel v="N4#12" /></td>
            <td><EditCell><input aria-label="拉筋" defaultValue="(A6)" /><button>…</button></EditCell></td>
            <td><Steel v="#6@100/20" /></td><td>2</td><td /><td />
          </SpanRow>
        </tbody>
      </SpanTable>
    </SpanMain>
  </SpanDock>
);

/* ---------- overlays ---------- */

const Overlay = styled.svg`
  position: absolute;
  inset: 0;
  width: 100%;
  height: 100%;
  pointer-events: none;
`;
const arrow = (tx: number, ty: number, ex: number, ey: number, head: number, half: number, w: number) => {
  const len = Math.hypot(ex - tx, ey - ty);
  const ux = (ex - tx) / len, uy = (ey - ty) / len;
  const at = (d: number, o: number) => `${(tx + ux * d - uy * o).toFixed(1)} ${(ty + uy * d + ux * o).toFixed(1)}`;
  return `M${at(0, 0)}L${at(head, half)}L${at(head - 4, w)}L${at(len, 0.5)}L${at(len, -0.5)}L${at(head - 4, -w)}L${at(head, -half)}z`;
};
const Arrows = () => (
  <Overlay fill="#ff3b38">
    <path d={arrow(488, 129, 973, 384, 18, 8, 4)} />
    <path d={arrow(476, 152, 970, 458, 18, 8, 4)} />
    <path d={arrow(436, 173, 976, 501, 18, 8, 4)} />
    <path d={arrow(1498, 402, 1479, 762, 17, 8, 4)} />
    <path d={arrow(1478, 763, 1728, 141, 18, 9, 6)} />
  </Overlay>
);

const Gauge = styled.aside`
  position: absolute;
  top: 31px;
  right: 0;
  display: flex;
  align-items: center;
  color: #d8dce4;
`;
const Speeds = styled.div`
  width: 76px;
  height: 42px;
  margin-right: -18px;
  padding: 2px 0 0 9px;
  border-radius: 12px;
  background: rgba(42, 48, 60, 0.94);
  font-size: 11px;
  line-height: 20px;
  span { display: flex; gap: 14px; }
  b { font-weight: 400; color: #4ab0f0; }
  span + span b { color: #30c850; }
`;
const Dial = styled.div`
  display: grid;
  place-items: center;
  width: 60px;
  height: 60px;
  border-radius: 50%;
  background: #4a4f5c;
  svg, span { grid-area: 1 / 1; }
  span { font-family: "Open Sans", sans-serif; font-weight: 300; font-size: 25px; line-height: 30px; }
  small { font-size: 10px; }
`;
const Thermo = styled.svg`
  position: absolute;
  top: 319px;
  right: 0;
`;
const Toast = styled.div`
  position: absolute;
  right: 0;
  bottom: 0;
  width: 230px;
  height: 5px;
  border-top: 1px solid #ff7850;
  background: linear-gradient(90deg, #ffb098 34px, #fff 34px);
`;

const menus = ["文件(F)", "编辑(E)", "楼层(L)", "构件(N)", "绘图(D)", "修改(M)", "钢筋量(Q)", "视图(V)", "工具(T)", "云应用(Y)", "BIM应用(I)", "在线服务(S)", "帮助(H)", "版本号(B)"];

export default function App() {
  return (
    <Page>
      <GlobalStyle />
      <BrowserPane />
      <WindowEdge />
      <CadApp>
        <MenuBar>
          <Menus>{menus.map((m) => <MenuItem key={m}>{m}</MenuItem>)}</Menus>
          <ToolBtn><Icon name="change" />新建变更</ToolBtn><Caret />
          <ToolBtn><Icon name="service" />联系客服</ToolBtn>
          <Account>
            <ToolBtn><Icon name="user" />c6852567</ToolBtn><Caret />
            <MenuItem>造价豆:0</MenuItem>
            <Icon name="bell" />
            <ToolBtn><Icon name="chat" />我要建</ToolBtn>
          </Account>
        </MenuBar>
        <ToolRow $h={31}>
          <Strip $gripless $w={152}>
            <Tools items={[["file", ""], ["open", ""]]} /><Caret $w={11} />
            <Tools items={[["save", ""], "|", ["undo", ""], "v"]} />
            <More>»</More>
          </Strip>
          <Strip $gripless $w={551}>
            <Tools items={[["define", "定义"], ["sigma", "汇总计算"], ["cloud", "云检查"], ["slab", "平齐板顶"], ["find", "查找图元"], ["glasses", "查看钢筋量"], ["batch", "批量选择", "dim"]]} />
            <More>»</More>
          </Strip>
          <Strip $gripless>
            <Tools items={[["rect", "二维"], "v", ["cube", "俯视"], "v", ["orbit", "动态观察"], ["part3d", "局部三维"], "|", ["full", "全屏"], ["zoom", "缩放"], "v", ["pan", "平移"], "v", ["rotateScreen", "屏幕旋转"], "v"]} />
          </Strip>
        </ToolRow>
        <Body>
          <NavPanel />
          <MidPanel />
          <Work>
            <ToolRow $h={26}>
              <Strip>
                <Tools items={[["erase", "删除"], "|", ["copy", "复制"], ["mirror", "镜像"], "|", ["move", "移动"], ["rotate", "旋转"], "|", ["extend", "延伸"], ["trim", "修剪"], "|", ["brk", "打断"], ["join", "合并"], ["split", "分割", "dim"], "|", ["align", "对齐"], "v", ["offset", "偏移"], ["stretch", "拉伸"]]} />
              </Strip>
            </ToolRow>
            <ToolRow $h={29}>
              <Strip $w={568}>
                <Combo label="楼层" value="基础层" w={57} />
                <Combo label="构件类型" value="梁" w={69} />
                <Combo label="构件" value="梁" w={70} />
                <Combo label="构件名称" value="KL-1" w={69} />
                <Combo label="分层" value="分层1" w={69} />
                <Tools items={["|", ["prop", "属性", "on"], ["editBar", "编辑钢筋"]]} />
                <More>»</More>
              </Strip>
              <Strip>
                <Tools items={[["twoPt", "两点"], ["parallel", "平行"], ["ptAngle", "点角"], "v"]} />
              </Strip>
            </ToolRow>
            <ToolRow $h={29}>
              <Strip $w={731}>
                <Tools items={[["cursor", "选择"], "v", "|", ["line", "直线"], ["ptLen", "点加长度"], ["arc", "三点画弧"]]} /><Caret />
                <Combo label="画弧方式" value="" w={55} />
                <Tools items={[["rect", "矩形"], "|", ["smart", "智能布置"]]} /><Caret $w={9} />
                <Tools items={["|", ["beamProp", "修改梁段属性"], ["mark", "原位标注", "on"], "v"]} />
                <More>»</More>
              </Strip>
              <Strip />
            </ToolRow>
            <Plan />
            <ToolRow $h={30}>
              <Strip $w={212}><Tools items={[["ortho", "正交"], ["snap", "对象捕捉", "on"], ["dyn", "动态输入", "on"]]} /></Strip>
              <Strip $w={264}><Tools items={[["cross", "交点"], ["perp", "垂点", "on"], ["mid", "中点", "on"], ["vertex", "顶点"], ["coord", "坐标"]]} /></Strip>
              <Strip>
                <Combo label="偏移方式" value="不偏移" w={57} />
                <Divider />
                <OffsetField>X=<NumberBox><input type="text" defaultValue="0" /><Spin /></NumberBox></OffsetField>
                <OffsetField>mm Y=<NumberBox><input type="text" defaultValue="0" /><Spin /></NumberBox></OffsetField>
              </Strip>
            </ToolRow>
            <Spacer $h={4} />
            <SpanPanel />
          </Work>
        </Body>
      </CadApp>
      <Arrows />
      <Gauge>
        <Speeds>
          <span><b>↑</b>0K/s</span>
          <span><b>↓</b>0K/s</span>
        </Speeds>
        <Dial>
          <svg width="60" height="60" fill="none" strokeWidth="2">
            <path d="M30 4a26 26 0 0 1 26 26" stroke="#40d8b8" />
            <path d="M56 30a26 26 0 0 1-26 26" stroke="#90d860" />
            <path d="M30 56A26 26 0 0 1 5 38" stroke="#f0c840" />
          </svg>
          <span>69<small>%</small></span>
        </Dial>
      </Gauge>
      <Thermo width="9" height="56">
        <rect x="1" y="1" width="12" height="44" rx="5" fill="#4a5866" />
        <circle cx="8" cy="48" r="8" fill="#4a5866" />
        <circle cx="8" cy="48" r="5" fill="#40b8f0" />
        <path d="M6 16v30" stroke="#2098e8" strokeWidth="3" />
      </Thermo>
      <Toast />
    </Page>
  );
}
